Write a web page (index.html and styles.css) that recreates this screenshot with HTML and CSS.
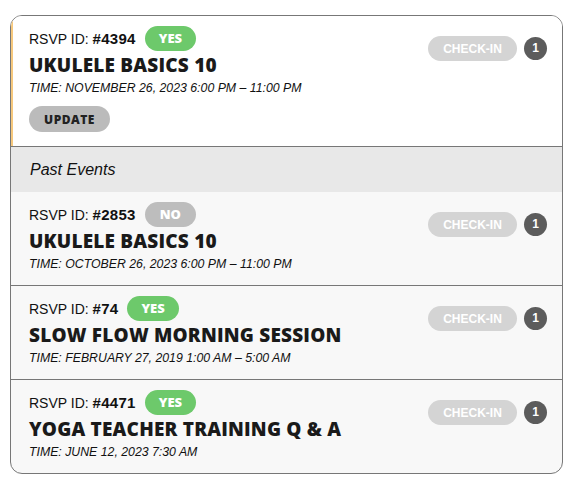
FILE: index.html
```html
<!doctype html>
<html lang="en">
<head>
  <meta charset="utf-8">
  <title>My RSVPs</title>
  <link rel="stylesheet" href="styles.css">
</head>
<body>

<div class="rsvp-list">
  <div class="event upcoming">
    <div class="info">
      <div class="rsvp-row">
        <span class="rsvp-id">RSVP ID: <b>#4394</b></span>
        <span class="answer yes">YES</span>
      </div>
      <div class="title">UKULELE BASICS 10</div>
      <div class="time">TIME: NOVEMBER 26, 2023 6:00 PM – 11:00 PM</div>
      <button class="update">UPDATE</button>
    </div>
    <div class="actions">
      <button class="checkin">CHECK-IN</button>
      <span class="count">1</span>
    </div>
  </div>

  <div class="past-header">Past Events</div>

  <div class="event">
    <div class="info">
      <div class="rsvp-row">
        <span class="rsvp-id">RSVP ID: <b>#2853</b></span>
        <span class="answer no">NO</span>
      </div>
      <div class="title">UKULELE BASICS 10</div>
      <div class="time">TIME: OCTOBER 26, 2023 6:00 PM – 11:00 PM</div>
    </div>
    <div class="actions">
      <button class="checkin">CHECK-IN</button>
      <span class="count">1</span>
    </div>
  </div>

  <div class="event">
    <div class="info">
      <div class="rsvp-row">
        <span class="rsvp-id">RSVP ID: <b>#74</b></span>
        <span class="answer yes">YES</span>
      </div>
      <div class="title">SLOW FLOW MORNING SESSION</div>
      <div class="time">TIME: FEBRUARY 27, 2019 1:00 AM – 5:00 AM</div>
    </div>
    <div class="actions">
      <button class="checkin">CHECK-IN</button>
      <span class="count">1</span>
    </div>
  </div>

  <div class="event">
    <div class="info">
      <div class="rsvp-row">
        <span class="rsvp-id">RSVP ID: <b>#4471</b></span>
        <span class="answer yes">YES</span>
      </div>
      <div class="title">YOGA TEACHER TRAINING Q &amp; A</div>
      <div class="time">TIME: JUNE 12, 2023 7:30 AM</div>
    </div>
    <div class="actions">
      <button class="checkin">CHECK-IN</button>
      <span class="count">1</span>
    </div>
  </div>
</div>

</body>
</html>
```

FILE: styles.css
```css
body {
  margin: 15px 9px 0 10px;
  font-family: "Liberation Sans", Arial, sans-serif;
  color: #111;
  background: #fff;
}
.rsvp-list {
  border: 1px solid #777;
  border-radius: 12px;
  overflow: hidden;
  background: #f8f8f8;
}
.event {
  display: flex;
  justify-content: space-between;
  align-items: flex-start;
  padding: 10px 15px 10px 18px;
  border-top: 1px solid #777;
}
.event:first-child {
  border-top: none;
}
.event.upcoming {
  background: #fff;
  border-left: 2px solid #f6c87d;
  padding-left: 16px;
  padding-bottom: 14px;
}
.past-header + .event {
  border-top: none;
}
.past-header {
  background: #e8e8e8;
  border-top: 1px solid #777;
  height: 45px;
  line-height: 45px;
  padding-left: 19px;
  font-size: 16px;
  font-style: italic;
}
.rsvp-row {
  display: flex;
  align-items: center;
  gap: 9px;
  height: 25px;
}
.rsvp-id {
  font-size: 14px;
}
.rsvp-id b {
  font-size: 15px;
  letter-spacing: 0.3px;
}
.answer {
  display: inline-block;
  height: 25px;
  line-height: 25px;
  padding: 0 14px;
  border-radius: 13px;
  color: #fff;
  font-family: "Open Sans", sans-serif;
  font-weight: 800;
  font-size: 13px;
}
.answer.yes {
  background: #6dc96b;
}
.answer.no {
  background: #bdbdbd;
  padding: 0 15px;
}
.title {
  margin-top: 2px;
  font-family: "Open Sans", sans-serif;
  font-weight: 800;
  font-size: 19px;
  line-height: 24px;
  letter-spacing: 0.2px;
  color: #1a1a1a;
}
.time {
  font-size: 12.3px;
  font-style: italic;
  line-height: 22px;
}
.update {
  margin-top: 7px;
  height: 26px;
  width: 81px;
  border: none;
  border-radius: 13px;
  background: #bbb;
  color: #222;
  font-family: "Open Sans", sans-serif;
  font-weight: 800;
  font-size: 12px;
  letter-spacing: 0.5px;
}
.actions {
  display: flex;
  align-items: center;
  gap: 7px;
  margin-top: 10px;
}
.checkin {
  height: 25px;
  width: 89px;
  border: none;
  border-radius: 13px;
  background: #d4d4d4;
  color: #fff;
  font-family: "Liberation Sans", Arial, sans-serif;
  font-weight: bold;
  font-size: 12px;
}
.count {
  width: 23px;
  height: 23px;
  line-height: 23px;
  border-radius: 50%;
  background: #5c5c5c;
  color: #fff;
  text-align: center;
  font-weight: bold;
  font-size: 12px;
}
```
